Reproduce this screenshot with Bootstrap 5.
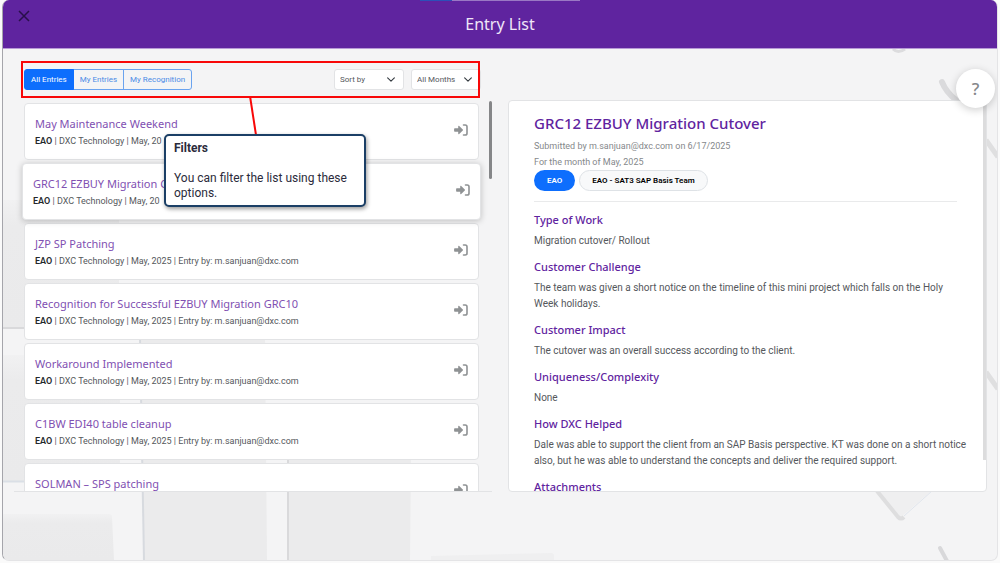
<!DOCTYPE html>
<html lang="en">
<head>
<meta charset="utf-8">
<meta name="viewport" content="width=device-width, initial-scale=1">
<title>Entry List</title>
<link href="https://cdn.jsdelivr.net/npm/bootstrap@5.3.0/dist/css/bootstrap.min.css" rel="stylesheet">
<style>
:root { --brand: #5f249f; --brand-soft: #7f50b2; --line: #e2e3e5; }
body { font-family: Roboto, "Liberation Sans", sans-serif; font-size: 9px; line-height: 15px; color: #55585c; background: #fafafa; }
.modal-frame { height: calc(100vh - 2px); margin: 0 2px 2px; border: 1px solid #e4e4e6; border-left-color: #a5a5ab; border-top: 0; border-radius: 7px; background: #f4f4f5; isolation: isolate; }
.backdrop-art { inset: 0; z-index: -1; }
.topbar { height: 49px; background: var(--brand); border-bottom: 1px solid #b79ad6; }
.topbar h1 { font-family: "Noto Sans", sans-serif; font-size: 16px; line-height: 20px; color: #efe6f8; }
.tab-strip { height: 1px; top: 0; left: 42%; width: 16%; background: linear-gradient(90deg, #2c50b8 20%, #9a78c4 20%); }
.close-btn { top: 8px; left: 13px; color: #29104a; line-height: 0; }
.page-body { min-height: 0; padding: 12px 10px 68px 11px; gap: 16px; }
.col-list { flex: 478 1 0; min-width: 0; }
.col-detail { flex: 479 1 0; min-width: 0; padding-top: 39px; }
.filters { margin: 0 13px 3px 9px; height: 37px; padding-left: 1px; }
.filters::after { content: ""; position: absolute; inset: 0 -1px 0 -2px; border: 2px solid #f80808; pointer-events: none; z-index: 3; }
.filters .btn { --bs-btn-padding-y: 2px; --bs-btn-padding-x: 6px; --bs-btn-border-radius: 3px; line-height: 15px; }
.filters .btn-group .btn { border-color: #6aa3ef; font-size: 8px; color: #4b8be6; }
.filters .btn-group .btn.active { border-color: #0d6efd; color: #fff; }
.filters .form-select { width: 70px; height: 21px; font-size: 8px; line-height: 15px; padding: 0 18px 0 5px; border-color: var(--line); border-radius: 3px; color: #55585c; background-position: right 7px center; background-size: 10px 9px; }
.filters .month-select { margin-left: 7px; margin-right: -2px; }
.list-wrap { min-height: 0; }
.list-scroll { min-height: 0; overflow: hidden; border-bottom: 1px solid var(--line); padding: 2px 13px 0 10px; }
.entry { flex: none; height: 57px; margin-bottom: 3px; padding: 1px 10px 0; border: 1px solid var(--line); border-radius: 4px; background: #fff; color: inherit; text-decoration: none; }
.entry.current { margin-left: -2px; margin-right: -2px; box-shadow: 0 1px 6px rgba(0,0,0,.22); z-index: 1; }
.entry h2 { font-family: "Noto Sans", sans-serif; font-size: 11px; line-height: 18px; font-weight: 400; color: var(--brand-soft); margin: 0; }
.entry p { line-height: 17px; margin: 0; }
.entry b { font-weight: 600; color: #24272b; }
.entry svg { color: #8f9294; flex: none; margin-bottom: 4px; }
.thumb { background: #858688; border-radius: 2px; width: 3px; height: 20%; top: 0; right: 0; }
.detail { min-height: 0; overflow: hidden; border: 1px solid var(--line); border-radius: 4px; background: #fff; padding: 11px 19px 0 25px; }
.detail .rail { top: 0; right: 0; width: 3px; height: 92%; background: #dcdcdd; }
.detail h2 { font-family: "Noto Sans", sans-serif; font-size: 15px; line-height: 22px; font-weight: 500; color: var(--brand); margin: 0 0 4px; }
.meta { line-height: 16px; color: #85888b; margin: 0; }
.tag-pill { height: 21px; padding: 0 12px; font-size: 8px; font-weight: 600; line-height: 19px; border: 1px solid transparent; }
.detail hr { margin: 10px 10px 9px 0; border-color: #a9abae; }
.detail h3 { font-family: "Noto Sans", sans-serif; font-size: 11px; line-height: 18px; font-weight: 500; color: var(--brand); margin: 0 0 4px; }
.detail h3 + p { font-size: 10px; line-height: 16px; margin: 0 0 9px; }
.help-btn { top: 69px; right: 2px; width: 39px; height: 39px; border: 0; background: #fff; color: #85878a; font-family: "Noto Sans", sans-serif; font-size: 17px; line-height: 39px; font-weight: 500; box-shadow: 0 2px 8px rgba(0,0,0,.2); z-index: 4; }
.callout-box { top: 73px; left: 150px; width: 202px; padding: 5px 8px 4px; border: 2px solid #1b3f66; border-radius: 5px; background: #fff; color: #2b2b3b; font-size: 12px; line-height: 15px; box-shadow: 1px 2px 4px rgba(0,0,0,.4); z-index: 5; }
.callout-line { left: 225px; top: 35px; z-index: 4; }
</style>
</head>
<body>
<svg width="0" height="0" class="position-absolute" aria-hidden="true">
  <symbol id="enter" viewBox="0 0 14 12">
    <path d="M.8 4.2H4.2V2.4c0-.6.6-.8 1-.4l3.600 3.500c.3.300.3.700 0 1L5.200 10c-.4.4-1 .2-1-.4V7.800H.8c-.4 0-.7-.3-.7-.7V4.900c0-.4.3-.7.7-.7z" fill="currentColor"/>
    <path d="M9.500 1h1.700Q13 1 13 2.800v6.400Q13 11 11.200 11H9.500" fill="none" stroke="currentColor" stroke-width="1.600" stroke-linecap="round"/>
  </symbol>
</svg>
<main class="modal-frame position-relative d-flex flex-column overflow-hidden">
  <svg class="backdrop-art position-absolute w-100 h-100" viewBox="3 0 994 560" preserveAspectRatio="none" aria-hidden="true">
    <defs>
      <linearGradient id="slab" x1="0" y1="0" x2="0" y2="1"><stop offset="0" stop-color="#f1f1f2"/><stop offset=".2" stop-color="#ebebec"/><stop offset="1" stop-color="#eaeaeb"/></linearGradient>
    </defs>
    <path d="M3 200H119V327H3z" fill="url(#slab)"/><path d="M3 328H119" stroke="#d9d9db" stroke-width="2"/>
    <path d="M3 355H120V481H3z" fill="url(#slab)"/><path d="M3 481.500H120" stroke="#dadfe6" stroke-width="2"/>
    <path d="M3 514H109q3 0 3 3l2 43H3z" fill="url(#slab)"/>
    <path d="M140 338H265L267 560H144z" fill="#ebebec"/><path d="M140 338L144 560" stroke="#d7dadf" stroke-width="2"/>
    <path d="M288 455H411L410 560H288z" fill="#ebebec"/><path d="M288 455V560" stroke="#d9d9db" stroke-width="2"/>
    <path d="M431 560V556l120-3q3 0 3 3v4z" fill="#efeff0"/>
    <path d="M877 492L900 518 930 492z" fill="#efeff0"/><path d="M877 491L898 517q3 3 6 0" fill="none" stroke="#dededf" stroke-width="4"/><path d="M904 516L932 491" stroke="#e0e5ec"/>
    <path d="M893 49q5 5 12 0" stroke="#dcdcde" stroke-width="3" fill="none"/>
    <path d="M942 82q4 10 14 18" stroke="#dadadc" stroke-width="6" stroke-linecap="round" fill="none"/>
    <path d="M986 140L998 157M986 372L998 389" stroke="#dfdfe0" stroke-width="5"/>
    <path d="M940 548l7 13" stroke="#d8d8da" stroke-width="4" stroke-linecap="round"/>
  </svg>

  <header class="topbar d-flex align-items-center justify-content-center position-relative flex-shrink-0">
    <span class="tab-strip position-absolute"></span>
    <button type="button" class="close-btn btn p-0 border-0 position-absolute" aria-label="Close">
      <svg width="16" height="16" viewBox="0 0 16 16" fill="none" stroke="currentColor" stroke-width="1.500"><path d="M3 3L13 13M13 3L3 13"/></svg>
    </button>
    <h1 class="m-0 fw-normal">Entry List</h1>
  </header>
  <button type="button" class="help-btn rounded-circle position-absolute p-0 text-center">?</button>

  <div class="page-body d-flex flex-grow-1">
    <section class="col-list d-flex flex-column position-relative">
      <div class="filters position-relative d-flex align-items-center flex-shrink-0">
        <div class="btn-group" role="group" aria-label="Entry scope">
          <button type="button" class="btn btn-outline-primary active">All Entries</button>
          <button type="button" class="btn btn-outline-primary">My Entries</button>
          <button type="button" class="btn btn-outline-primary">My Recognition</button>
        </div>
        <select class="form-select ms-auto" aria-label="Sort by"><option>Sort by</option></select>
        <select class="form-select month-select" aria-label="Month"><option>All Months</option></select>
      </div>
      <svg class="callout-line position-absolute" width="24" height="40" aria-hidden="true"><path d="M11 0L17 39" stroke="#f80808" stroke-width="2"/></svg>
      <aside class="callout-box position-absolute">
        <strong>Filters</strong><br><br>
        You can filter the list using these options.
      </aside>
      <div class="list-wrap position-relative d-flex flex-column flex-grow-1">
        <span class="thumb position-absolute"></span>
        <div class="list-scroll d-flex flex-column flex-grow-1">
          <a href="#" class="entry d-flex align-items-center justify-content-between"><div><h2>May Maintenance Weekend</h2><p><b>EAO</b> | DXC Technology | May, 20</p></div><svg width="14" height="12"><use href="#enter"/></svg></a>
          <a href="#" class="entry current position-relative d-flex align-items-center justify-content-between"><div><h2>GRC12 EZBUY Migration C</h2><p><b>EAO</b> | DXC Technology | May, 20</p></div><svg width="14" height="12"><use href="#enter"/></svg></a>
          <a href="#" class="entry d-flex align-items-center justify-content-between"><div><h2>JZP SP Patching</h2><p><b>EAO</b> | DXC Technology | May, 2025 | Entry by: m.sanjuan@dxc.com</p></div><svg width="14" height="12"><use href="#enter"/></svg></a>
          <a href="#" class="entry d-flex align-items-center justify-content-between"><div><h2>Recognition for Successful EZBUY Migration GRC10</h2><p><b>EAO</b> | DXC Technology | May, 2025 | Entry by: m.sanjuan@dxc.com</p></div><svg width="14" height="12"><use href="#enter"/></svg></a>
          <a href="#" class="entry d-flex align-items-center justify-content-between"><div><h2>Workaround Implemented</h2><p><b>EAO</b> | DXC Technology | May, 2025 | Entry by: m.sanjuan@dxc.com</p></div><svg width="14" height="12"><use href="#enter"/></svg></a>
          <a href="#" class="entry d-flex align-items-center justify-content-between"><div><h2>C1BW EDI40 table cleanup</h2><p><b>EAO</b> | DXC Technology | May, 2025 | Entry by: m.sanjuan@dxc.com</p></div><svg width="14" height="12"><use href="#enter"/></svg></a>
          <a href="#" class="entry d-flex align-items-center justify-content-between"><div><h2>SOLMAN – SPS patching</h2><p><b>EAO</b> | DXC Technology | May, 2025 | Entry by: m.sanjuan@dxc.com</p></div><svg width="14" height="12"><use href="#enter"/></svg></a>
        </div>
      </div>
    </section>

    <section class="col-detail d-flex flex-column">
      <article class="detail position-relative flex-grow-1">
        <span class="rail position-absolute"></span>
        <h2>GRC12 EZBUY Migration Cutover</h2>
        <p class="meta">Submitted by m.sanjuan@dxc.com on 6/17/2025</p>
        <p class="meta">For the month of May, 2025</p>
        <div class="d-flex gap-1">
          <span class="tag-pill rounded-pill text-bg-primary">EAO</span>
          <span class="tag-pill rounded-pill text-bg-light border">EAO - SAT3 SAP Basis Team</span>
        </div>
        <hr>
        <h3>Type of Work</h3>
        <p>Migration cutover/ Rollout</p>
        <h3>Customer Challenge</h3>
        <p>The team was given a short notice on the timeline of this mini project which falls on the Holy Week holidays.</p>
        <h3>Customer Impact</h3>
        <p>The cutover was an overall success according to the client.</p>
        <h3>Uniqueness/Complexity</h3>
        <p>None</p>
        <h3>How DXC Helped</h3>
        <p>Dale was able to support the client from an SAP Basis perspective. KT was done on a short notice also, but he was able to understand the concepts and deliver the required support.</p>
        <h3>Attachments</h3>
      </article>
    </section>
  </div>
</main>
<script src="https://cdn.jsdelivr.net/npm/bootstrap@5.3.0/dist/js/bootstrap.bundle.min.js"></script>
</body>
</html>
